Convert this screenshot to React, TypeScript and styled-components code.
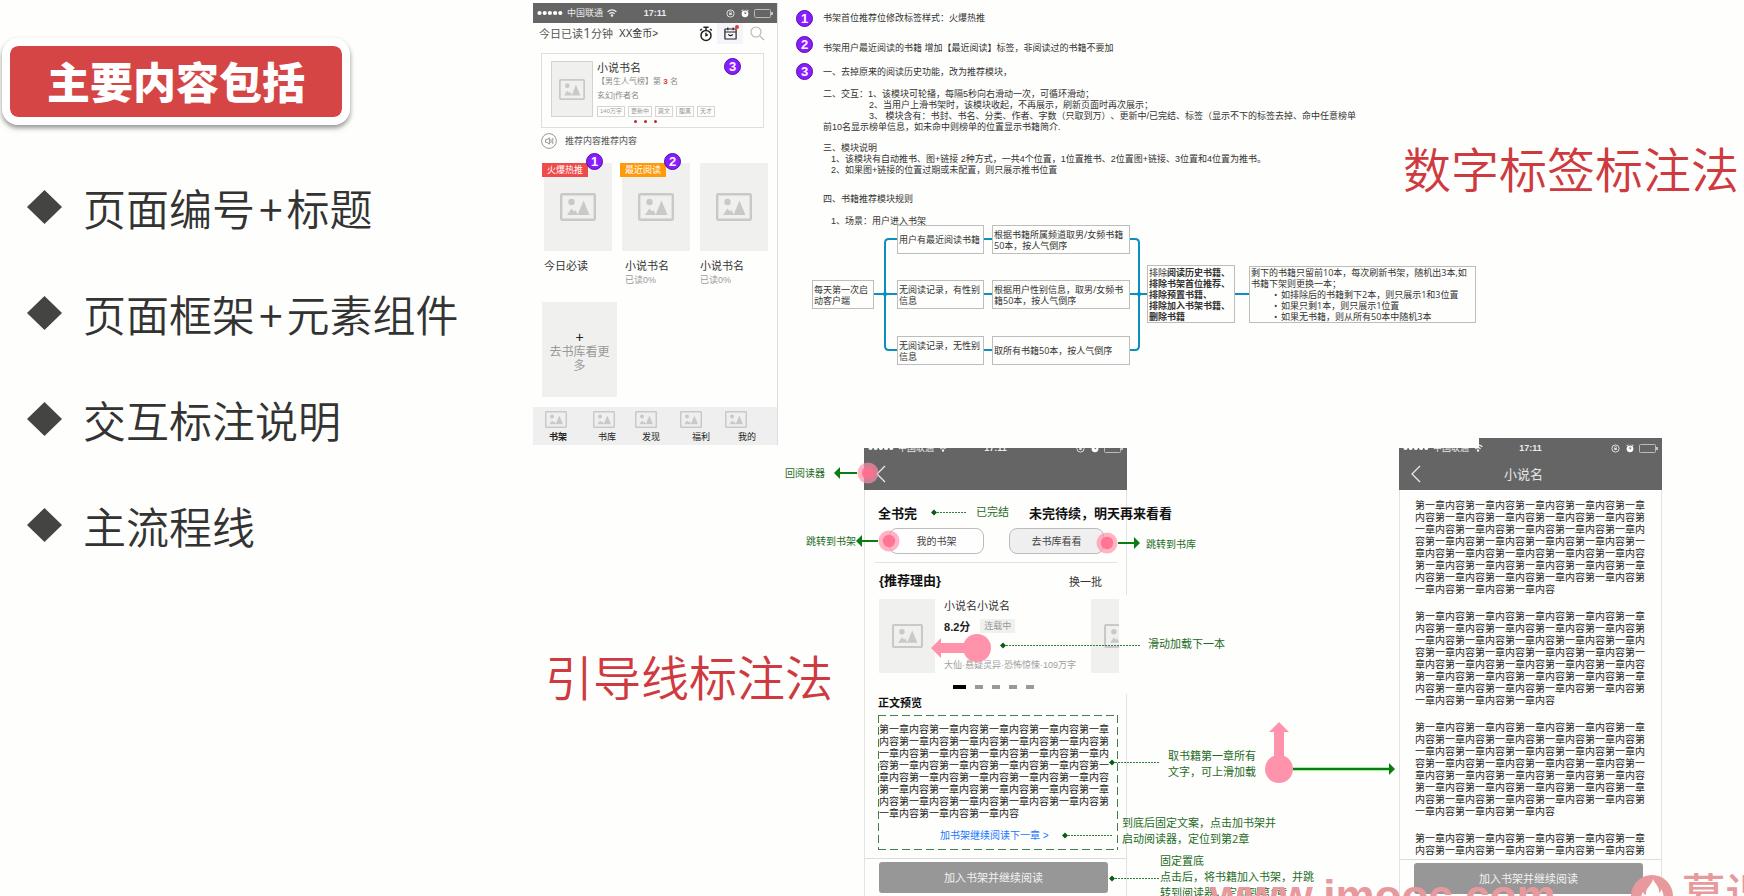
import React from "react";
import styled, { createGlobalStyle, css } from "styled-components";

const cjk = '"Noto Sans CJK SC", sans-serif';
const display = '"Noto Sans CJK SC DemiLight", "Noto Sans CJK SC", sans-serif';
const arial = '"Liberation Sans", "Noto Sans CJK SC", sans-serif';
const humanist = '"Open Sans", "Noto Sans CJK SC", sans-serif';

const GlobalStyle = createGlobalStyle`
  * { box-sizing: border-box; }
  body {
    margin: 0;
    background: #fefefc;
    color: #333;
    font-family: ${cjk};
    text-spacing-trim: space-all;
  }
  h1, h2, h3, h4, p, ul, ol, figure { margin: 0; padding: 0; }
  ul, ol { list-style: none; }
  button { margin: 0; padding: 0; border: 0; background: none; color: inherit; font-family: inherit; }
  a { text-decoration: none; }
`;

/* ---------- page ---------- */

const Page = styled.main`
  position: relative;
  display: grid;
  grid-template-columns: 533px minmax(0, 1fr);
  height: 100vh;
  overflow: hidden;
`;

const Outline = styled.section`
  display: flex;
  flex-direction: column;
  align-items: flex-start;
  padding: 38px 0 0 2px;
`;

const OutlineTitle = styled.h1`
  width: 348px;
  padding: 13px 0 16px;
  border: 8px solid #fff;
  border-radius: 16px;
  background: #d54545;
  background-clip: padding-box;
  box-shadow: 0 3px 5px rgba(0, 0, 0, 0.42);
  color: #fff;
  font-size: 43px;
  line-height: 42px;
  font-weight: 900;
  text-align: center;
`;

const OutlineList = styled.ul`
  display: flex;
  flex-direction: column;
  gap: 42px;
  padding: 50px 0 0 25px;
`;

const OutlineItem = styled.li`
  display: flex;
  align-items: center;
  gap: 21px;
  height: 64px;
  font-family: ${display};
  font-size: 43px;
  line-height: 62px;
  font-weight: 350;
  white-space: nowrap;
`;

const Plus = styled.span`
  margin: 0 4px;
`;

const Boards = styled.div`
  display: flex;
  flex-direction: column;
  min-width: 0;
`;

const MethodTitle = styled.h2`
  color: #cf3a40;
  font-family: ${display};
  font-size: 48px;
  line-height: 64px;
  font-weight: 350;
  white-space: nowrap;
`;

const TopBoard = styled.section`
  display: flex;
  align-items: flex-start;
  padding-top: 3px;
`;

const TopTitle = styled(MethodTitle)`
  margin-left: auto;
  padding: 132px 5px 0 0;
`;

const BottomBoard = styled.section`
  position: relative;
  display: flex;
  align-items: stretch;
  flex: 1;
  margin-top: -7px;
`;

const BottomTitle = styled(MethodTitle)`
  padding: 205px 31px 0 12px;
`;

/* ---------- shared phone parts ---------- */

const StatusRow = styled.div`
  display: grid;
  grid-template-columns: 1fr auto 1fr;
  align-items: center;
  flex: none;
  height: 20px;
  padding: 0 4px;
  background: #656565;
  color: #ececec;
  font-family: ${arial};
  font-size: 9px;
  line-height: 20px;
`;

const StatusLeft = styled.div`
  display: flex;
  align-items: center;
  gap: 4px;
`;

const StatusRight = styled.div`
  display: flex;
  align-items: center;
  justify-content: flex-end;
  gap: 5px;
`;

const Clock = styled.strong`
  font-weight: 700;
`;

const StatusBar = () => (
  <StatusRow>
    <StatusLeft>
      <svg width="26" height="6" viewBox="0 0 26 6" fill="#fff">
        {[0, 1, 2, 3, 4].map((i) => (
          <circle key={i} cx={2.5 + i * 5.2} cy="3" r="2.1" />
        ))}
      </svg>
      <span>中国联通</span>
      <svg width="10" height="8" viewBox="0 0 10 8" fill="none" stroke="#eee" strokeWidth="1.3">
        <path d="M0.6 2.8 Q5 -1 9.4 2.8" />
        <path d="M2.4 4.8 Q5 2.6 7.6 4.8" />
        <circle cx="5" cy="6.6" r="0.6" fill="#eee" />
      </svg>
    </StatusLeft>
    <Clock>17:11</Clock>
    <StatusRight>
      <svg width="10" height="9" viewBox="0 0 10 9" fill="none" stroke="#ddd">
        <circle cx="4.5" cy="4.5" r="3.6" />
        <rect x="3.2" y="4" width="2.6" height="2" fill="#ddd" stroke="none" />
        <path d="M3.6 4 V3.2 a0.9 0.9 0 0 1 1.8 0 V4" strokeWidth="0.7" />
      </svg>
      <svg width="8" height="9" viewBox="0 0 8 9">
        <circle cx="4" cy="4.8" r="3.4" fill="#fff" />
        <path d="M4 2.8 V5 L5.4 4" stroke="#656565" fill="none" strokeWidth="0.9" />
        <path d="M0.6 2 L2 0.6 M7.4 2 L6 0.6" stroke="#fff" />
      </svg>
      <svg width="19" height="9" viewBox="0 0 19 9" fill="none" stroke="#bbb">
        <rect x="0.5" y="0.5" width="16" height="8" rx="1" />
        <path d="M18 3 V6" stroke="#eee" strokeWidth="1.4" />
      </svg>
    </StatusRight>
  </StatusRow>
);

const PictureIcon = ({ width, height }: { width: number; height: number }) => (
  <svg width={width} height={height} viewBox="0 0 36 28" preserveAspectRatio="none">
    <rect x="1.2" y="1.2" width="33.6" height="25.6" rx="1" fill="none" stroke="#c9c9c9" strokeWidth="2.4" />
    <circle cx="11.5" cy="9" r="3.2" fill="#c9c9c9" />
    <path d="M7 22 L11.5 15.5 L14 18.5 L15.5 17 L18 22 Z" fill="#c9c9c9" />
    <path d="M17.5 22 L23.5 7.5 L29.5 22 Z" fill="#c9c9c9" />
  </svg>
);

const NumberMark = styled.span`
  display: inline-flex;
  align-items: center;
  justify-content: center;
  flex: none;
  width: 17px;
  height: 17px;
  border: 1px solid #4d12a8;
  border-radius: 50%;
  background: #8a1cff;
  color: #fff;
  font-family: ${arial};
  font-size: 13px;
  line-height: 15px;
  font-weight: 700;
`;

/* ---------- bookshelf phone ---------- */

const ShelfPhone = styled.article`
  flex: none;
  width: 245px;
  border-right: 1px solid #dedede;
`;

const ReadBar = styled.div`
  display: flex;
  align-items: center;
  height: 21px;
  padding: 0 12px 0 6px;
  font-family: ${humanist};
  font-size: 11px;
  line-height: 20px;
  color: #555;
`;

const ReadCount = styled.span`
  font-size: 14px;
`;

const Coins = styled.span`
  margin: 0 auto 0 6px;
  color: #333;
  font-family: ${arial};
  font-size: 10px;
`;

const IconButton = styled.button<{ $tinted?: boolean }>`
  position: relative;
  display: flex;
  align-items: center;
  justify-content: center;
  width: ${(p) => (p.$tinted ? 26 : 16)}px;
  height: 21px;
  margin-right: ${(p) => (p.$tinted ? 6 : 3)}px;
  background: ${(p) => (p.$tinted ? "#f4f4fa" : "transparent")};

  &:last-child { margin-right: 0; }
`;

const RedDot = styled.i`
  position: absolute;
  top: 2px;
  right: 4px;
  width: 4px;
  height: 4px;
  border-radius: 50%;
  background: #e63a2e;
`;

const FeatureCard = styled.section`
  position: relative;
  display: flex;
  gap: 4px;
  width: 223px;
  height: 75px;
  margin: 9px 0 0 8px;
  padding: 7px 0 0 9px;
  border: 1px solid #dedede;
`;

const FeatureCover = styled.div`
  display: flex;
  align-items: center;
  justify-content: center;
  width: 42px;
  height: 56px;
  border: 1px solid #d2d2d2;
  background: #f0f0ef;
`;

const FeatureInfo = styled.div`
  display: flex;
  flex-direction: column;
  color: #8a8a8a;
  font-family: ${arial};
  font-size: 8px;
  line-height: 14px;
  white-space: nowrap;
`;

const FeatureName = styled.h3`
  color: #333;
  font-size: 11px;
  line-height: 14px;
  font-weight: 400;
`;

const Rank = styled.b`
  color: #e03b30;
`;

const Tags = styled.ul`
  display: flex;
  gap: 3px;
  margin-top: 3px;
`;

const Tag = styled.li`
  height: 11px;
  padding: 0 2px;
  border: 1px solid #d5d5d5;
  color: #999;
  font-size: 6px;
  line-height: 9px;
`;

const Pager = styled.div`
  position: absolute;
  left: 92px;
  bottom: 4px;
  display: flex;
  gap: 7px;

  i {
    width: 3px;
    height: 3px;
    border-radius: 50%;
    background: #c02a2a;
  }
`;

const FeatureMark = styled(NumberMark)`
  position: absolute;
  top: 4px;
  right: 22px;
`;

const Notice = styled.p`
  display: flex;
  align-items: center;
  gap: 8px;
  height: 17px;
  margin: 4px 0 0 8px;
  color: #555;
  font-size: 9px;
  line-height: 17px;
`;

const Books = styled.ul`
  display: grid;
  grid-template-columns: repeat(3, 68px);
  gap: 10px;
  margin: 14px 0 0 11px;
`;

const Book = styled.li`
  position: relative;
`;

const Cover = styled.div`
  display: flex;
  align-items: center;
  justify-content: center;
  height: 88px;
  background: #f0f0ef;
`;

const BookText = styled.div<{ $left: number }>`
  padding: 7px 0 0 ${(p) => p.$left}px;
  font-size: 11px;
  line-height: 15px;
`;

const Progress = styled.div`
  color: #9a9a9a;
  font-family: ${arial};
  font-size: 9px;
  line-height: 14px;
`;

const Ribbon = styled.span<{ $color: string }>`
  position: absolute;
  top: 0;
  left: -2px;
  height: 14px;
  padding: 0 5px;
  background: ${(p) => p.$color};
  color: #fff;
  font-size: 9px;
  line-height: 13px;
`;

const BookMark = styled(NumberMark)`
  position: absolute;
  top: -10px;
  left: 42px;
`;

const MoreButton = styled.button`
  display: flex;
  flex-direction: column;
  align-items: center;
  width: 75px;
  height: 95px;
  margin: 15px 0 0 9px;
  padding: 28px 5px 0;
  background: #f0f0ef;
  color: #999;
  font-size: 12px;
  line-height: 14px;
`;

const MorePlus = styled.span`
  color: #222;
  font-family: ${arial};
  font-size: 14px;
`;

const TabBar = styled.nav`
  display: grid;
  grid-template-columns: 48px 42px 45px 45px 31px;
  height: 38px;
  margin-top: 10px;
  padding: 4px 0 0 12px;
  background: #efefef;
`;

const Tab = styled.button<{ $width: number; $active?: boolean }>`
  display: flex;
  flex-direction: column;
  align-items: flex-start;
  width: ${(p) => p.$width}px;
  color: #222;
  font-size: 9px;
  line-height: 17px;
  font-weight: ${(p) => (p.$active ? 700 : 400)};

  span { align-self: flex-end; }
`;

const tabs = [
  { name: "书架", width: 22 },
  { name: "书库", width: 23 },
  { name: "发现", width: 25 },
  { name: "福利", width: 30 },
  { name: "我的", width: 31 },
];

const Shelf = () => (
  <ShelfPhone>
    <StatusBar />
    <ReadBar>
      <span>
        今日已读<ReadCount>1</ReadCount>分钟
      </span>
      <Coins>XX金币&gt;</Coins>
      <IconButton aria-label="计时">
        <svg width="14" height="16" viewBox="0 0 14 16" fill="none" stroke="#222" strokeWidth="1.5">
          <circle cx="7" cy="9.4" r="5" />
          <path d="M4.4 1.3 H9.6 M7 1.3 V4 M7 6.8 V9.6 L9 8.6 M1.2 4.4 L3 3 M12.8 4.4 L11 3" />
        </svg>
      </IconButton>
      <IconButton $tinted aria-label="签到">
        <svg width="13" height="13" viewBox="0 0 13 13" fill="none" stroke="#222" strokeWidth="1.2">
          <rect x="0.9" y="2" width="11.2" height="10" rx="0.6" />
          <path d="M1 5 H12 M3.8 0.4 V3.2 M9.2 0.4 V3.2 M4.4 7.4 Q6.5 10 8.8 7.4" />
        </svg>
        <RedDot />
      </IconButton>
      <IconButton aria-label="搜索">
        <svg width="15" height="15" viewBox="0 0 15 15" fill="none" stroke="#b5b5b5" strokeWidth="1.1">
          <circle cx="6" cy="6" r="5" />
          <path d="M9.8 9.8 L14 14" />
        </svg>
      </IconButton>
    </ReadBar>
    <FeatureCard>
      <FeatureCover>
        <PictureIcon width={26} height={21} />
      </FeatureCover>
      <FeatureInfo>
        <FeatureName>小说书名</FeatureName>
        <p>
          【男生人气榜】第 <Rank>3</Rank> 名
        </p>
        <p>玄幻|作者名</p>
        <Tags>
          {["140万字", "更新中", "爽文", "腹黑", "天才"].map((t) => (
            <Tag key={t}>{t}</Tag>
          ))}
        </Tags>
      </FeatureInfo>
      <FeatureMark>3</FeatureMark>
      <Pager>
        <i />
        <i />
        <i />
      </Pager>
    </FeatureCard>
    <Notice>
      <svg width="16" height="16" viewBox="0 0 16 16" fill="none" stroke="#999">
        <circle cx="8" cy="8" r="7.4" />
        <path d="M4.5 6.6 H6 L8.4 4.8 V11.2 L6 9.4 H4.5 Z M10 6 V10 M11.8 5 V11" />
      </svg>
      推荐内容推荐内容
    </Notice>
    <Books>
      <Book>
        <Cover>
          <PictureIcon width={36} height={28} />
        </Cover>
        <Ribbon $color="#f04a4a">火爆热推</Ribbon>
        <BookMark>1</BookMark>
        <BookText $left={0}>今日必读</BookText>
      </Book>
      <Book>
        <Cover>
          <PictureIcon width={36} height={28} />
        </Cover>
        <Ribbon $color="#ff9a0a">最近阅读</Ribbon>
        <BookMark>2</BookMark>
        <BookText $left={3}>
          小说书名
          <Progress>已读0%</Progress>
        </BookText>
      </Book>
      <Book>
        <Cover>
          <PictureIcon width={36} height={28} />
        </Cover>
        <BookText $left={0}>
          小说书名
          <Progress>已读0%</Progress>
        </BookText>
      </Book>
    </Books>
    <MoreButton>
      <MorePlus>+</MorePlus>
      去书库看更多
    </MoreButton>
    <TabBar>
      {tabs.map((t, i) => (
        <Tab key={t.name} $width={t.width} $active={i === 0}>
          <PictureIcon width={22} height={17} />
          <span>{t.name}</span>
        </Tab>
      ))}
    </TabBar>
  </ShelfPhone>
);

/* ---------- numbered notes ---------- */

const Notes = styled.div`
  flex: none;
  width: 590px;
  padding: 7px 0 0 18px;
  font-family: ${arial};
  font-size: 9px;
  line-height: 11px;
  white-space: nowrap;
`;

const Note = styled.div<{ $height: number }>`
  display: flex;
  gap: 10px;
  min-height: ${(p) => p.$height}px;
`;

const NoteBody = styled.div<{ $top: number }>`
  padding-top: ${(p) => p.$top}px;
`;

const Para = styled.div<{ $gap?: number }>`
  margin-top: ${(p) => p.$gap ?? 0}px;
`;

const Line = styled.p<{ $indent?: number }>`
  padding-left: ${(p) => p.$indent ?? 0}px;
`;

const Diagram = styled.figure`
  position: relative;
  height: 140px;
  margin: -3px 0 0 16px;
  font-family: ${humanist};

  > svg { position: absolute; inset: 0; }
`;

const Node = styled.div<{ $x: number; $y: number; $w: number; $h: number; $bold?: boolean }>`
  position: absolute;
  left: ${(p) => p.$x}px;
  top: ${(p) => p.$y}px;
  display: flex;
  flex-direction: column;
  justify-content: center;
  width: ${(p) => p.$w}px;
  height: ${(p) => p.$h}px;
  padding: 0 1px;
  border: 1px solid #bdbdbd;
  background: #fefefc;
  white-space: normal;
  font-weight: ${(p) => (p.$bold ? 700 : 400)};
`;

const Plain = styled.span`
  font-weight: 400;
`;

const Bullets = styled.ul`
  padding-left: 30px;

  li { display: flex; white-space: nowrap; }
  li::before { content: "•"; width: 7px; margin-left: -7px; }
`;

const FlowDiagram = () => (
  <Diagram>
    <svg width="664" height="140" viewBox="0 0 664 140" fill="none" stroke="#0b8fc0" strokeWidth="2">
      <path d="M61 70 H86 M86 15 H77 Q73 15 73 19 V122 Q73 126 77 126 H86" />
      <path d="M171 15 H181 M171 70 H181 M171 126 H181" />
      <path d="M318 15 H323 Q327 15 327 19 V122 Q327 126 323 126 H318 M318 70 H336 M423 70 H438" />
      <path d="M70 70 L73 67 L76 70 L73 73 Z M324 70 L327 67 L330 70 L327 73 Z" fill="#0b8fc0" stroke="none" />
    </svg>
    <Node $x={0} $y={56} $w={62} $h={29}>每天第一次启动客户端</Node>
    <Node $x={85} $y={1} $w={87} $h={29}>用户有最近阅读书籍</Node>
    <Node $x={85} $y={56} $w={87} $h={29}>无阅读记录，有性别信息</Node>
    <Node $x={85} $y={112} $w={87} $h={29}>无阅读记录，无性别信息</Node>
    <Node $x={180} $y={1} $w={138} $h={29}>根据书籍所属频道取男/女频书籍50本，按人气倒序</Node>
    <Node $x={180} $y={56} $w={138} $h={29}>根据用户性别信息，取男/女频书籍50本，按人气倒序</Node>
    <Node $x={180} $y={112} $w={138} $h={29}>取所有书籍50本，按人气倒序</Node>
    <Node $x={335} $y={41} $w={88} $h={58} $bold>
      <p>
        <Plain>排除</Plain>阅读历史书籍、
      </p>
      <p>排除书架首位推荐、</p>
      <p>排除预置书籍、</p>
      <p>排除加入书架书籍、</p>
      <p>删除书籍</p>
    </Node>
    <Node $x={437} $y={42} $w={227} $h={57}>
      <p>
        剩下的书籍只留前10本，每次刷新书架，随机出3本,如
        <br />
        书籍下架则更换一本；
      </p>
      <Bullets>
        <li>如排除后的书籍剩下2本，则只展示1和3位置</li>
        <li>如果只剩1本，则只展示1位置</li>
        <li>如果无书籍，则从所有50本中随机3本</li>
      </Bullets>
    </Node>
  </Diagram>
);

const Specification = () => (
  <Notes>
    <Note $height={26}>
      <NumberMark>1</NumberMark>
      <NoteBody $top={3}>书架首位推荐位修改标签样式：火爆热推</NoteBody>
    </Note>
    <Note $height={27}>
      <NumberMark>2</NumberMark>
      <NoteBody $top={7}>书架用户最近阅读的书籍 增加【最近阅读】标签，非阅读过的书籍不要加</NoteBody>
    </Note>
    <Note $height={159}>
      <NumberMark>3</NumberMark>
      <NoteBody $top={4}>
        <Line>一、去掉原来的阅读历史功能，改为推荐模块，</Line>
        <Para $gap={11}>
          <Line>二、交互：1、该模块可轮播，每隔5秒向右滑动一次，可循环滑动；</Line>
          <Line $indent={46}>2、当用户上滑书架时，该模块收起，不再展示，刷新页面时再次展示；</Line>
          <Line $indent={46}>
            3、 模块含有：书封、书名、分类、作者、字数（只取到万）、更新中/已完结、标签（显示不下的标签去掉、命中任意榜单
          </Line>
          <Line>前10名显示榜单信息，如未命中则榜单的位置显示书籍简介.</Line>
        </Para>
        <Para $gap={10}>
          <Line>三、模块说明</Line>
          <Line $indent={8}>1、该模块有自动推书、图+链接 2种方式，一共4个位置，1位置推书、2位置图+链接、3位置和4位置为推书。</Line>
          <Line $indent={8}>2、如果图+链接的位置过期或未配置，则只展示推书位置</Line>
        </Para>
        <Para $gap={18}>
          <Line>四、书籍推荐模块规则</Line>
        </Para>
        <Para $gap={11}>
          <Line $indent={8}>1、场景：用户进入书架</Line>
        </Para>
      </NoteBody>
    </Note>
    <FlowDiagram />
  </Notes>
);

/* ---------- reader phones ---------- */

const phoneLine = "1px solid #e2e2e2";

const ReaderPhone = styled.article<{ $top?: number }>`
  position: relative;
  display: flex;
  flex-direction: column;
  flex: none;
  width: 263px;
  margin-top: ${(p) => p.$top ?? 0}px;
  border-left: ${phoneLine};
`;

const ReaderHead = styled.header<{ $height: number }>`
  display: flex;
  flex-direction: column;
  justify-content: flex-end;
  flex: none;
  height: ${(p) => p.$height}px;
  margin-left: -1px;
  overflow: hidden;
  background: #656565;
`;

const NavBar = styled.div`
  display: grid;
  grid-template-columns: 24px 1fr 50px;
  align-items: center;
  flex: none;
  height: 32px;
  padding-left: 12px;
  color: #e6e6e6;
  font-size: 13px;
  line-height: 32px;
  text-align: center;
`;

const BackButton = styled.button`
  display: flex;
`;

const NavTitle = styled.h3`
  font-size: 13px;
  font-weight: 400;
`;

const Mask = styled.div`
  position: absolute;
  top: 0;
  left: -1px;
  width: 80px;
  height: 10px;
  background: #fefefc;
`;

const ReaderNav = ({ title }: { title?: string }) => (
  <NavBar>
    <BackButton aria-label="返回">
      <svg width="10" height="18" viewBox="0 0 10 18" fill="none" stroke="#eee" strokeWidth="1.2">
        <path d="M9 1 L1 9 L9 17" />
      </svg>
    </BackButton>
    {title && <NavTitle>{title}</NavTitle>}
  </NavBar>
);

const Section = styled.section<{ $height: number; $open?: boolean }>`
  flex: none;
  height: ${(p) => p.$height}px;
  padding: 0 10px 0 13px;
  ${(p) =>
    !p.$open &&
    css`
      border-right: ${phoneLine};
    `}
`;

const EndRow = styled.div`
  display: flex;
  align-items: center;
  gap: 112px;
  padding-top: 12px;
  color: #111;
  font-size: 13px;
  line-height: 22px;
  font-weight: 700;
  white-space: nowrap;
`;

const ChoiceRow = styled.div`
  display: flex;
  gap: 25px;
  padding: 4px 0 8px 11px;
`;

const ChoiceButton = styled.button<{ $filled?: boolean }>`
  width: 95px;
  height: 26px;
  border: 1px solid #bcbcbc;
  border-radius: 8px;
  background: ${(p) => (p.$filled ? "#efefef" : "#fefefe")};
  color: #444;
  font-size: 10px;
  line-height: 24px;
`;

const Rule = styled.hr`
  height: 1px;
  margin: 0 -1px 0 -3px;
  border: 0;
  background: #e2e2e2;
`;

const ReasonRow = styled.div`
  display: flex;
  justify-content: space-between;
  align-items: center;
  padding: 7px 14px 0 1px;
  line-height: 22px;
`;

const Reason = styled.h4`
  color: #111;
  font-family: ${arial};
  font-size: 13px;
  font-weight: 700;
`;

const SwapButton = styled.button`
  color: #333;
  font-size: 11px;
  line-height: 18px;
`;

const Carousel = styled.div`
  display: flex;
  padding: 4px 0 0 1px;
`;

const SlideCover = styled.div<{ $w: number }>`
  display: flex;
  align-items: center;
  justify-content: flex-start;
  flex: none;
  width: ${(p) => p.$w}px;
  height: 74px;
  padding-left: 13px;
  overflow: hidden;
  background: #f0f0ef;

  svg { flex: none; }
`;

const SlideText = styled.div`
  display: flex;
  flex-direction: column;
  flex: none;
  width: 156px;
  padding-left: 9px;
  white-space: nowrap;
`;

const SlideName = styled.h4`
  font-size: 11px;
  line-height: 12px;
  font-weight: 400;
`;

const ScoreRow = styled.div`
  display: flex;
  align-items: center;
  gap: 10px;
  height: 14px;
  margin-top: 8px;
  color: #222;
  font-family: ${arial};
  font-size: 11px;
  font-weight: 700;
`;

const State = styled.span`
  padding: 0 4px;
  background: #f0f0ef;
  color: #999;
  font-size: 9px;
  line-height: 14px;
  font-weight: 400;
`;

const Genre = styled.p`
  margin-top: 25px;
  color: #a0a0a0;
  font-family: ${arial};
  font-size: 9px;
  line-height: 14px;
`;

const Dashes = styled.div`
  display: flex;
  justify-content: center;
  gap: 9px;
  margin-top: 12px;
  padding-right: 8px;

  i { width: 8px; height: 4px; background: #999; }
  i:first-child { width: 13px; background: #000; }
`;

const PreviewTitle = styled.h4`
  color: #111;
  font-size: 11px;
  line-height: 16px;
`;

const PreviewBox = styled.div`
  display: flex;
  flex-direction: column;
  height: 135px;
  width: 240px;
  margin-top: 5px;
  color: #222;
  font-size: 10px;
  line-height: 12px;
  background: repeating-linear-gradient(90deg, #3e8050 0 8px, transparent 8px 12px) top / 100% 1px no-repeat,
    repeating-linear-gradient(90deg, #3e8050 0 8px, transparent 8px 12px) bottom / 100% 1px no-repeat,
    repeating-linear-gradient(180deg, #3e8050 0 8px, transparent 8px 12px) left / 1px 100% no-repeat,
    repeating-linear-gradient(180deg, #3e8050 0 8px, transparent 8px 12px) right / 1px 100% no-repeat;

  p { width: 232px; padding: 8px 0 0 1px; }
`;

const NextLink = styled.a`
  margin: 9px 0 0 62px;
  color: #1677ff;
  font-family: ${arial};
  line-height: 16px;
`;

const Footer = styled.footer`
  flex: 1;
  padding: 3px 18px 0 14px;
  border-top: 1px solid #dcdcdc;
  border-right: ${phoneLine};
`;

const JoinButton = styled.button`
  width: 100%;
  height: 31px;
  border-radius: 3px;
  background: #979797;
  color: #f2f2f2;
  font-size: 11px;
  line-height: 31px;
`;

const Chapters = styled.div`
  display: flex;
  flex-direction: column;
  gap: 15px;
  flex: none;
  height: 369px;
  padding: 9px 0 0 15px;
  overflow: hidden;
  border-right: ${phoneLine};
  color: #222;
  font-size: 10px;
  line-height: 12px;

  p { width: 232px; }
`;

const chapter = "第一章内容".repeat(35);
const chapterOpening = chapter.slice(0, 46);

const EndOfBook = () => (
  <ReaderPhone $top={10}>
    <ReaderHead $height={42}>
      <StatusBar />
      <ReaderNav />
    </ReaderHead>
    <Section $height={105}>
      <EndRow>
        <h4>全书完</h4>
        <span>未完待续，明天再来看看</span>
      </EndRow>
      <ChoiceRow>
        <ChoiceButton>我的书架</ChoiceButton>
        <ChoiceButton $filled>去书库看看</ChoiceButton>
      </ChoiceRow>
      <Rule />
      <ReasonRow>
        <Reason>{"{推荐理由}"}</Reason>
        <SwapButton>换一批</SwapButton>
      </ReasonRow>
    </Section>
    <Section $height={99} $open>
      <Carousel>
        <SlideCover $w={56}>
          <PictureIcon width={31} height={24} />
        </SlideCover>
        <SlideText>
          <SlideName>小说名小说名</SlideName>
          <ScoreRow>
            8.2分<State>连载中</State>
          </ScoreRow>
          <Genre>大仙·悬疑灵异·恐怖惊悚·109万字</Genre>
        </SlideText>
        <SlideCover $w={28}>
          <PictureIcon width={31} height={24} />
        </SlideCover>
      </Carousel>
      <Dashes>
        <i />
        <i />
        <i />
        <i />
        <i />
      </Dashes>
    </Section>
    <Section $height={164}>
      <PreviewTitle>正文预览</PreviewTitle>
      <PreviewBox>
        <p>{chapter}</p>
        <NextLink href="#next">加书架继续阅读下一章 &gt;</NextLink>
      </PreviewBox>
    </Section>
    <Footer>
      <JoinButton>加入书架并继续阅读</JoinButton>
    </Footer>
  </ReaderPhone>
);

const ReadingPhone = styled(ReaderPhone)`
  margin-left: 272px;
`;

const Reading = () => (
  <ReadingPhone>
    <ReaderHead $height={52}>
      <StatusBar />
      <ReaderNav title="小说名" />
    </ReaderHead>
    <Mask />
    <Chapters>
      <p>{chapter}</p>
      <p>{chapter}</p>
      <p>{chapter}</p>
      <p>{chapterOpening}</p>
    </Chapters>
    <Footer>
      <JoinButton>加入书架并继续阅读</JoinButton>
    </Footer>
  </ReadingPhone>
);

/* ---------- callouts drawn over the reader phones ---------- */

const Overlay = styled.svg`
  position: absolute;
  top: 0;
  left: 0;
  pointer-events: none;
`;

const Callout = styled.p<{ $x: number; $y: number; $small?: boolean }>`
  position: absolute;
  left: ${(p) => p.$x}px;
  top: ${(p) => p.$y}px;
  color: #1d6b25;
  font-family: ${humanist};
  font-size: ${(p) => (p.$small ? 10 : 11)}px;
  line-height: 16px;
  white-space: nowrap;
`;

const Touch = ({ x, y }: { x: number; y: number }) => (
  <g>
    <circle cx={x} cy={y} r="10.5" fill="#ff8fa9" fillOpacity="0.68" />
    <circle cx={x} cy={y} r="6.2" fill="#ff6f8f" fillOpacity="0.9" />
  </g>
);

const Arrow = ({ from, to, y }: { from: number; to: number; y: number }) => {
  const d = Math.sign(to - from);
  return (
    <g>
      <path d={`M${from} ${y} H${to - d * 5}`} stroke="#0a7d12" strokeWidth="2" />
      <path d={`M${to} ${y} L${to - d * 6} ${y - 6} V${y + 6} Z`} fill="#0a7d12" />
    </g>
  );
};

const Leader = ({ x, to, y }: { x: number; to: number; y: number }) => (
  <g>
    <path d={`M${x} ${y} H${to}`} stroke="#2f7d3a" strokeWidth="1" strokeDasharray="2 1" />
    <path d={`M${x - 3} ${y} L${x} ${y - 3} L${x + 3} ${y} L${x} ${y + 3} Z`} fill="#0b5a14" />
  </g>
);

const Callouts = () => (
  <>
    <Overlay width="1211" height="458" viewBox="0 0 1211 458" fill="none">
      <Arrow from={324} to={301} y={35} />
      <Arrow from={345} to={323} y={103} />
      <Arrow from={585} to={607} y={105} />
      <Touch x={335} y={35} />
      <Touch x={356} y={103} />
      <Touch x={574} y={105} />
      <Leader x={401} to={434} y={74.5} />
      <Leader x={470} to={607} y={207.5} />
      <Leader x={579} to={627} y={324.5} />
      <Leader x={532} to={579} y={397.5} />
      <Leader x={579} to={627} y={440.5} />
      <g fill="#ff93ab">
        <circle cx="444" cy="210" r="14" />
        <path d="M398 210 L408 200 V205 H431 V215 H408 V220 Z" />
        <circle cx="746" cy="331" r="14" />
        <path d="M746 284 L756 294 H751 V318 H741 V294 H736 Z" />
      </g>
      <path d="M760 331 H857" stroke="#a6f0a6" strokeWidth="4" />
      <Arrow from={760} to={862} y={331} />
    </Overlay>
    <Callout $x={252} $y={27} $small>回阅读器</Callout>
    <Callout $x={443} $y={66}>已完结</Callout>
    <Callout $x={273} $y={95} $small>跳转到书架</Callout>
    <Callout $x={613} $y={98} $small>跳转到书库</Callout>
    <Callout $x={615} $y={198}>滑动加载下一本</Callout>
    <Callout $x={635} $y={310}>
      取书籍第一章所有
      <br />
      文字，可上滑加载
    </Callout>
    <Callout $x={589} $y={377}>
      到底后固定文案，点击加书架并
      <br />
      启动阅读器，定位到第2章
    </Callout>
    <Callout $x={627} $y={415}>
      固定置底
      <br />
      点击后，将书籍加入书架，并跳
      <br />
      转到阅读器，定位到第1章
    </Callout>
  </>
);

const Watermark = styled.div`
  position: absolute;
  left: 1210px;
  bottom: -22px;
  display: flex;
  align-items: center;
  color: #e8999e;
  font-family: ${arial};
  font-size: 44px;
  line-height: 44px;
  font-weight: 700;
  white-space: nowrap;
  pointer-events: none;

  svg { margin: 0 9px 0 75px; }
`;

const Brand = styled.span`
  font-weight: 500;
`;

const outline = [
  ["页面编号", "标题"],
  ["页面框架", "元素组件"],
  ["交互标注说明"],
  ["主流程线"],
];

export default function App() {
  return (
    <Page>
      <GlobalStyle />
      <Outline>
        <OutlineTitle>主要内容包括</OutlineTitle>
        <OutlineList>
          {outline.map(([head, tail]) => (
            <OutlineItem key={head}>
              <svg width="35" height="34" viewBox="0 0 35 34" fill="#444443">
                <path d="M17.5 0 L35 17 L17.5 34 L0 17 Z" />
              </svg>
              <span>
                {head}
                {tail && (
                  <>
                    <Plus>+</Plus>
                    {tail}
                  </>
                )}
              </span>
            </OutlineItem>
          ))}
        </OutlineList>
      </Outline>
      <Boards>
        <TopBoard>
          <Shelf />
          <Specification />
          <TopTitle>数字标签标注法</TopTitle>
        </TopBoard>
        <BottomBoard>
          <BottomTitle>引导线标注法</BottomTitle>
          <EndOfBook />
          <Reading />
          <Callouts />
        </BottomBoard>
      </Boards>
      <Watermark>
        www.imooc.com
        <svg width="42" height="42" viewBox="0 0 42 42">
          <circle cx="21" cy="21" r="21" fill="#e8999e" />
          <path
            d="M22 4 C24 9 29 12 28 18 C30 17 30 15 30 14 C34 20 34 29 28 34 H13 C8 28 9 22 12 17 C13 19 14 20 15 20 C14 13 21 10 22 4 Z"
            fill="#fefefc"
          />
        </svg>
        <Brand>慕课</Brand>
      </Watermark>
    </Page>
  );
}
